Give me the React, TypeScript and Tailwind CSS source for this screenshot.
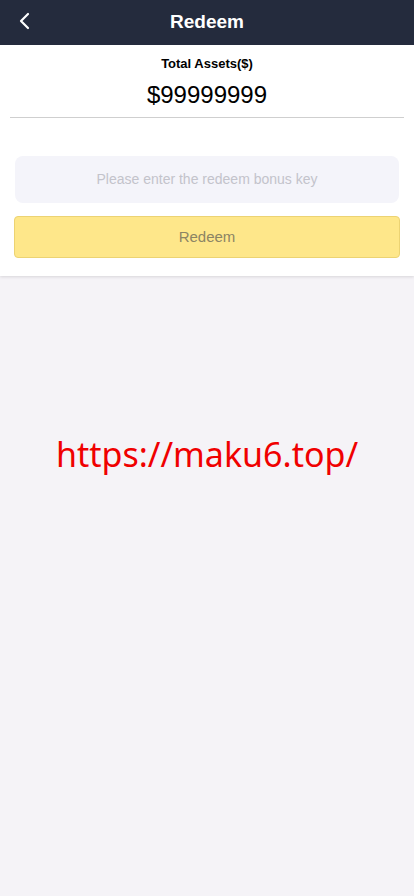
import React from "react";

export default function App() {
  return (
    <div className="min-h-[896px] w-[414px] bg-[#f5f3f7] flex flex-col" style={{ fontFamily: '"Liberation Sans", Arial, sans-serif' }}>
      <div className="h-[45px] bg-[#242b3d] flex items-center relative">
        <svg className="absolute left-[18px] top-[12px]" width="14" height="18" viewBox="0 0 14 18" fill="none">
          <path d="M10 2 L3 9 L10 16" stroke="white" strokeWidth="2.2" strokeLinecap="round" strokeLinejoin="round" />
        </svg>
        <div className="flex-1 text-center text-white font-bold text-[19px]">Redeem</div>
      </div>
      <div className="bg-white flex flex-col items-center px-[10px] pt-[11px] pb-[18px] shadow-[0_1px_3px_rgba(0,0,0,0.12)]">
        <div className="text-[13px] font-bold text-black leading-[16px]">Total Assets($)</div>
        <div className="text-[24px] text-black leading-[28px] mt-[9px]">$99999999</div>
        <div className="w-full h-px bg-[#cfcfcf] mt-[8px]" />
        <div className="w-full px-[5px] mt-[38px]">
          <div className="h-[47px] rounded-[8px] bg-[#f4f4fa] flex items-center justify-center text-[14px] text-[#c3c3cb]">
            Please enter the redeem bonus key
          </div>
        </div>
        <div className="w-full px-[4px] mt-[13px]">
          <div className="h-[42px] rounded-[4px] bg-[#fee78a] border border-[#ecd373] flex items-center justify-center text-[15px] text-[#8c8464]">
            Redeem
          </div>
        </div>
      </div>
      <div className="flex justify-center mt-[153px]">
        <div className="text-[34px] text-[#f00000] leading-[50px]" style={{ fontFamily: '"Noto Sans", "Open Sans", sans-serif' }}>https://maku6.top/</div>
      </div>
    </div>
  );
}
